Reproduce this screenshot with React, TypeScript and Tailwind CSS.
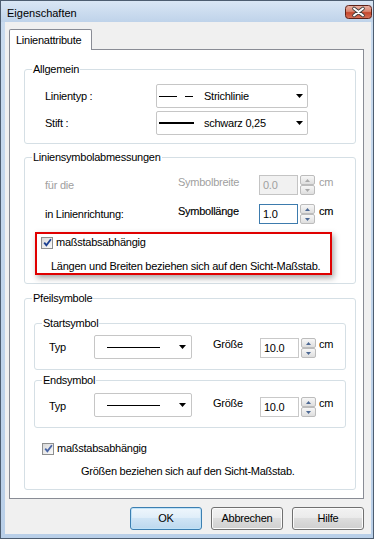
import React from "react";

function Arrow() {
  return (
    <svg width="7" height="4" viewBox="0 0 7 4" className="shrink-0">
      <polygon points="0,0 7,0 3.5,4" fill="#000" />
    </svg>
  );
}

function Combo({ className, arrowClass, children }: { className: string; arrowClass: string; children: React.ReactNode }) {
  return (
    <div className={`flex shrink-0 items-center rounded-[2px] border border-[#c6c6c6] bg-white ${className}`}>
      {children}
      <div className={`ml-auto ${arrowClass}`}>
        <Arrow />
      </div>
    </div>
  );
}

function SpinBtn({ up, disabled }: { up?: boolean; disabled?: boolean }) {
  return (
    <div className="flex h-[10px] w-[15px] items-center justify-center rounded-[2px] border border-[#bcbcbc] bg-[linear-gradient(#f7f7f7,#dedede)]">
      <svg width="5" height="3" viewBox="0 0 5 3">
        <polygon points={up ? "0,3 5,3 2.5,0" : "0,0 5,0 2.5,3"} fill={disabled ? "#a9a9a9" : "#4c6894"} />
      </svg>
    </div>
  );
}

function Spin({ value, disabled, focused }: { value: string; disabled?: boolean; focused?: boolean }) {
  const box = disabled
    ? "border-[#c4c4c4] bg-[#f1f1f1] text-[#a0a0a0]"
    : focused
    ? "border-[#3d7bad] bg-white text-black"
    : "border-[#c9c9c9] bg-white text-black";
  return (
    <div className="flex shrink-0">
      <div className={`flex h-[20px] w-[39px] items-center border pl-[3px] ${box}`}>{value}</div>
      <div className="ml-[2px] flex flex-col">
        <SpinBtn up disabled={disabled} />
        <SpinBtn disabled={disabled} />
      </div>
    </div>
  );
}

function Group({ label, className, children }: { label: string; className: string; children: React.ReactNode }) {
  return (
    <div className={`relative rounded-[3px] border border-[#d5dfe5] ${className}`}>
      <span className="absolute left-[7px] top-[-7px] bg-white px-[1px] leading-[13px]">{label}</span>
      {children}
    </div>
  );
}

function Check({ light }: { light?: boolean }) {
  return (
    <span className="flex h-[12px] w-[12px] shrink-0 items-center justify-center border border-[#8e8f8f] bg-[linear-gradient(135deg,#d8d8d8,#fbfbfb)]">
      <svg width="9" height="9" viewBox="0 0 9 9">
        <path d="M1.2 4.6 L3.4 7.2 L7.9 1.2" stroke={light ? "#4a66a6" : "#1b3f91"} strokeWidth="1.8" fill="none" />
      </svg>
    </span>
  );
}

function CloseBtn() {
  return (
    <svg width="27" height="14" viewBox="0 0 27 14" className="ml-auto mr-[1px] mt-[4px] shrink-0">
      <defs>
        <linearGradient id="cg" x1="0" y1="0" x2="0" y2="1">
          <stop offset="0" stopColor="#eab4a6" />
          <stop offset="0.45" stopColor="#d98570" />
          <stop offset="0.55" stopColor="#c5472d" />
          <stop offset="1" stopColor="#d8735b" />
        </linearGradient>
      </defs>
      <rect x="0.5" y="0.5" width="26" height="13" rx="3" fill="url(#cg)" stroke="#5e2218" />
      <path d="M9 3.5 L18 10.5 M18 3.5 L9 10.5" stroke="#3d3d3d" strokeWidth="3.6" strokeLinecap="round" />
      <path d="M9 3.5 L18 10.5 M18 3.5 L9 10.5" stroke="#ffffff" strokeWidth="2" strokeLinecap="round" />
    </svg>
  );
}

function SymbolGroup({ label, className, pt, inputMt, labelMt, typMt }: { label: string; className: string; pt: string; inputMt: string; labelMt: string; typMt: string }) {
  return (
    <Group label={label} className={`mx-[9px] pl-[14px] pb-[10px] ${pt} ${className}`}>
      <div className="flex items-start">
        <span className={`w-[45px] shrink-0 ${typMt}`}>Typ</span>
        <Combo className="h-[24px] w-[98px]" arrowClass="mr-[5px]">
          <svg width="53" height="1" viewBox="0 0 53 1" className="ml-[12px]">
            <rect x="0" y="0" width="53" height="1" fill="#000" />
          </svg>
        </Combo>
        <span className={`ml-[21px] w-[47px] shrink-0 ${labelMt}`}>Größe</span>
        <div className={inputMt}>
          <Spin value="10.0" />
        </div>
        <span className={`ml-[3px] ${labelMt}`}>cm</span>
      </div>
    </Group>
  );
}

export default function App() {
  return (
    <div className="whitespace-nowrap [font-family:'Liberation_Sans',Arial,sans-serif] text-[11px] leading-[13px] tracking-[-0.25px] text-black">
      <div className="flex h-[539px] w-[374px] flex-col overflow-hidden border border-[#4d5d70] bg-[linear-gradient(#c9dbef,#b9cfe8)]">
        {/* title bar */}
        <div className="flex h-[21px] shrink-0 items-start bg-[linear-gradient(#d9e6f4,#bfd3ea)]">
          <span className="ml-[6px] mt-[6px] tracking-[0px]">Eigenschaften</span>
          <CloseBtn />
        </div>

        {/* client area */}
        <div className="mb-[4px] ml-[4px] mr-[2px] flex flex-1 flex-col bg-[#f0f0f0] pb-[4px] pl-[4px] pr-[7px] pt-[7px]">
          {/* tab header */}
          <div className="flex">
            <div className="relative z-10 -mb-[1px] h-[21px] w-[83px] rounded-t-[2px] border border-b-0 border-[#898c95] bg-white pl-[6px] pt-[4px]">
              Linienattribute
            </div>
          </div>

          {/* tab panel */}
          <div className="flex flex-col border border-[#898c95] bg-white pb-[8px] pl-[14px] pr-[7px]">
            {/* Allgemein */}
            <Group label="Allgemein" className="mt-[19px] pb-[8px] pl-[20px] pt-[14px]">
              <div className="flex flex-col gap-[3px]">
                <div className="flex h-[24px] items-center">
                  <span className="w-[111px] shrink-0">Linientyp :</span>
                  <Combo className="h-[24px] w-[152px]" arrowClass="mr-[4px]">
                    <div className="ml-[2px] w-[45px] shrink-0">
                      <svg width="35" height="1" viewBox="0 0 35 1">
                        <rect x="0" y="0" width="18" height="1" fill="#000" />
                        <rect x="26" y="0" width="8" height="1" fill="#000" />
                      </svg>
                    </div>
                    <span>Strichlinie</span>
                  </Combo>
                </div>
                <div className="flex h-[24px] items-center">
                  <span className="w-[111px] shrink-0">Stift :</span>
                  <Combo className="h-[24px] w-[152px]" arrowClass="mr-[4px]">
                    <div className="ml-[2px] w-[45px] shrink-0">
                      <svg width="35" height="2" viewBox="0 0 35 2">
                        <rect x="0" y="0" width="35" height="2" fill="#000" />
                      </svg>
                    </div>
                    <span>schwarz 0,25</span>
                  </Combo>
                </div>
              </div>
            </Group>

            {/* Liniensymbolabmessungen */}
            <Group label="Liniensymbolabmessungen" className="mt-[13px] pb-[8px] pt-[17px]">
              <div className="flex h-[20px] items-start pl-[20px]">
                <span className="mt-[4px] w-[133px] shrink-0 text-[#a0a0a0]">für die</span>
                <span className="mt-[1px] w-[81px] shrink-0 text-[#a0a0a0]">Symbolbreite</span>
                <Spin value="0.0" disabled />
                <span className="ml-[4px] mt-[1px] text-[#a0a0a0]">cm</span>
              </div>
              <div className="mt-[9px] flex h-[20px] items-start pl-[20px]">
                <span className="mt-[4px] w-[133px] shrink-0">in Linienrichtung:</span>
                <span className="mt-[1px] w-[81px] shrink-0 [-webkit-text-stroke:0.15px_#000]">Symbollänge</span>
                <Spin value="1.0" focused />
                <span className="ml-[4px] mt-[1px] [-webkit-text-stroke:0.15px_#000]">cm</span>
              </div>
              <div className="ml-[10px] mt-[8px] w-[297px] border-2 border-[#e00000] bg-white pt-[2px] shadow-[2px_3px_6px_rgba(0,0,0,0.35)]">
                <div className="flex items-center gap-[3px] pl-[4px]">
                  <Check />
                  <span>maßstabsabhängig</span>
                </div>
                <div className="mt-[11px] pl-[14px]">Längen und Breiten beziehen sich auf den Sicht-Maßstab.</div>
              </div>
            </Group>

            {/* Pfeilsymbole */}
            <Group label="Pfeilsymbole" className="mt-[14px] pb-[11px] pt-[24px]">
              <SymbolGroup label="Startsymbol" className="" pt="pt-[11px]" inputMt="mt-[3px]" labelMt="mt-[3px]" typMt="mt-[6px]" />
              <SymbolGroup label="Endsymbol" className="mt-[10px]" pt="pt-[12px]" inputMt="mt-[4px]" labelMt="mt-[4px]" typMt="mt-[7px]" />
              <div className="ml-[17px] mt-[14px] flex items-center gap-[3px]">
                <Check light />
                <span>maßstabsabhängig</span>
              </div>
              <div className="ml-[56px] mt-[10px]">Größen beziehen sich auf den Sicht-Maßstab.</div>
            </Group>
          </div>

          {/* buttons */}
          <div className="mt-[8px] flex justify-end gap-[9px]">
            <button className="h-[23px] w-[72px] rounded-[3px] border border-[#3c7fb1] bg-[linear-gradient(#eef6fc_0%,#e0eef9_45%,#cfe4f5_50%,#bcd8ee_100%)] shadow-[inset_0_0_0_1px_#bfe2f8]">
              OK
            </button>
            <button className="h-[23px] w-[72px] rounded-[3px] border border-[#707070] bg-[linear-gradient(#f2f2f2_0%,#ebebeb_45%,#dddddd_50%,#cfcfcf_100%)] shadow-[inset_0_0_0_1px_#fbfbfb]">
              Abbrechen
            </button>
            <button className="h-[23px] w-[72px] rounded-[3px] border border-[#707070] bg-[linear-gradient(#f2f2f2_0%,#ebebeb_45%,#dddddd_50%,#cfcfcf_100%)] shadow-[inset_0_0_0_1px_#fbfbfb]">
              Hilfe
            </button>
          </div>
        </div>
      </div>
    </div>
  );
}
